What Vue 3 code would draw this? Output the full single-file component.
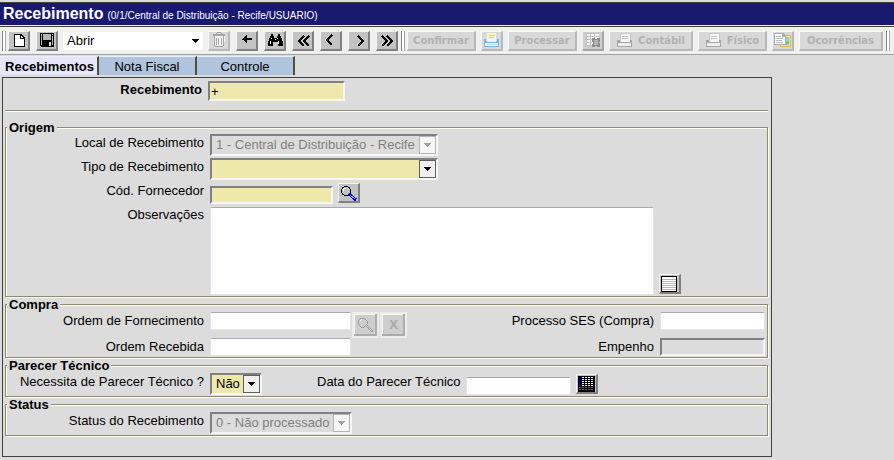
<script setup>
import { ref } from 'vue'

const tabs = ['Recebimentos', 'Nota Fiscal', 'Controle']
const activeTab = ref('Recebimentos')
const command = ref('Abrir')
const code = ref('+')
const notes = ref('')
</script>

<template>
  <div class="app">
    <header class="titlebar">
      <h1>Recebimento</h1>
      <span class="context">(0/1/Central de Distribuição - Recife/USUARIO)</span>
    </header>

    <div class="toolbar" role="toolbar">
      <span class="grip"></span>
      <div class="icons">
        <button class="tool" aria-label="Novo">
          <svg viewBox="0 0 18 16"><path d="M4 2h7l4 4v9H4z" fill="#000" /><path d="M5 3h5v4h4v7H5z" fill="#fff" /><path d="M11 4l2 2h-2z" fill="#fff" /></svg>
        </button>
        <button class="tool" aria-label="Salvar">
          <svg viewBox="0 0 18 16"><path d="M2 1h14v14H3l-1-1z" fill="#000" /><path d="M3 2h1v11H3zM14 4h1v9h-1zM14 2h1v1h-1zM5 2h8v6H5z" fill="#b4b4b4" /><path d="M11 10h2v4h-2z" fill="#d8d8d8" /></svg>
        </button>
      </div>
      <span class="select plain">
        <select v-model="command" aria-label="Comando"><option>Abrir</option></select>
        <span class="arrow"><svg viewBox="0 0 7 4"><path d="M0 0h7v1H6v1H5v1H4v1H3V3H2V2H1V1H0z" /></svg></span>
      </span>
      <div class="icons">
        <button class="tool off" disabled aria-label="Excluir">
          <svg viewBox="0 0 18 16"><path d="M4 4h11v1l-1 10H5L4 5z" fill="#f4f4f4" /><path d="M3 2h12v2H3zM7 0h4v1H7zM6 1h1v1H6zM11 1h1v1h-1zM4 4h1v10H4zM13 4h1v10h-1zM5 14h8v1H5zM6 6h1v7H6zM8 6h1v7H8zM11 6h1v7h-1z" fill="#a5a5a5" /></svg>
        </button>
        <button class="tool" aria-label="Voltar">
          <svg viewBox="0 0 18 16"><path d="M4 7h1V6h1V5h1V4h1V3h1v3h5v2H9v3H8v-1H7V9H6V8H4z" /></svg>
        </button>
        <button class="tool" aria-label="Localizar">
          <svg viewBox="0 0 18 16"><path d="M5 2h2v2h1v2h3V4h1V2h2v2h1v2h1v3h1v5h-5v-4H7v4H2V9h1V6h1V4h1z" /><path d="M5 6h1v1H5zM4 9h1v3H4zM11 6h1v1h-1zM12 9h1v3h-1zM9 7h1v1H9z" fill="#fff" /></svg>
        </button>
        <button class="tool" aria-label="Primeiro">
          <svg viewBox="0 0 18 16"><path d="M10 4L5 9l5 5M15 4l-5 5 5 5" class="chevron" /></svg>
        </button>
        <button class="tool" aria-label="Anterior">
          <svg viewBox="0 0 18 16"><path d="M10 3L5 8l5 5" class="chevron" /></svg>
        </button>
        <button class="tool" aria-label="Próximo">
          <svg viewBox="0 0 18 16"><path d="M8 4l5 5-5 5" class="chevron" /></svg>
        </button>
        <button class="tool" aria-label="Último">
          <svg viewBox="0 0 18 16"><path d="M4 4l5 5-5 5M9 4l5 5-5 5" class="chevron" /></svg>
        </button>
      </div>
      <span class="grip"></span>
      <div class="actions">
        <button class="action" disabled>Confirmar</button>
        <button class="tool off" disabled aria-label="Imprimir">
          <svg viewBox="0 0 18 16"><path d="M4 1h9v8H4z" fill="#f8f6c8" /><path d="M6 3h6v1H6zM6 5h5v1H6z" fill="#d5cf9c" /><path d="M1 7h2v2h11V7h2v8H1z" fill="#74b8f2" /><path d="M4 6h9v4H4zM2 11h13v3H2z" fill="#edf5fc" /><path d="M4 12h9v1H4z" fill="#c6dff2" /></svg>
        </button>
        <button class="action" disabled>Processar</button>
        <button class="tool mid" disabled aria-label="Cancelar processamento">
          <svg viewBox="0 0 18 16"><path d="M2 1h13v12H2z" fill="#f5f5f5" /><path d="M2 1h13v1H2zM2 4h13v1H2zM2 7h7v1H2zM2 10h6v1H2zM2 13h6v1H2zM2 1h1v13H2zM6 2h1v11H6zM10 2h1v4h-1z" fill="#c0c0c0" /><path d="M8 6h2l2 1 2-1h2v3l-1 2 1 1v3h-3l-1-1-2 1H8v-3l1-1-1-2z" fill="#8c8c8c" /><path d="M10 8h4v5h-4z" fill="#b4b4b4" /></svg>
        </button>
        <button class="action wide" disabled>
          <svg viewBox="0 0 18 16"><path d="M4 1h10v9H4z" fill="#f5f5f5" stroke="#c8c8c8" /><path d="M6 4h6v1H6zM6 6h6v1H6z" fill="#c4c4c4" /><path d="M1 8h3v2h10V8h2v7H1z" fill="#a6a6a6" /><path d="M2 11h13v3H2z" fill="#eee" /></svg>
          Contábil
        </button>
        <button class="action" disabled>
          <svg viewBox="0 0 18 16"><path d="M4 1h10v9H4z" fill="#f5f5f5" stroke="#c8c8c8" /><path d="M6 4h6v1H6zM6 6h6v1H6z" fill="#c4c4c4" /><path d="M1 8h3v2h10V8h2v7H1z" fill="#a6a6a6" /><path d="M2 11h13v3H2z" fill="#eee" /></svg>
          Físico
        </button>
        <button class="tool off" disabled aria-label="Documentos">
          <svg viewBox="0 0 18 16"><path d="M6 3h11v12H6z" fill="#dcb75c" /><path d="M7 4h9v10H7z" fill="#f6df84" /><path d="M11 5h4v8h-4z" fill="#83d3ea" /><path d="M11 9h4v3h-4z" fill="#80c75c" /><path d="M0 1h9l3 3v9H0z" fill="#a9adb4" /><path d="M1 2h7v3h3v7H1z" fill="#fff" /><path d="M2 4h5v1H2zM2 6h7v1H2zM2 8h6v1H2zM2 10h7v1H2z" fill="#b8b8b8" /></svg>
        </button>
        <button class="action wide" disabled>Ocorrências</button>
      </div>
      <span class="grip"></span>
    </div>

    <nav class="tabs" role="tablist">
      <button v-for="tab in tabs" :key="tab" role="tab" class="tab" :class="{ active: tab === activeTab }"
        :aria-selected="tab === activeTab" @click="activeTab = tab">{{ tab }}</button>
    </nav>

    <main class="panel">
      <div class="row key">
        <label for="rec">Recebimento</label>
        <input id="rec" v-model="code" class="sunken required" type="text" />
      </div>
      <hr />

      <fieldset class="origin">
        <legend>Origem</legend>
        <div class="row">
          <label for="local">Local de Recebimento</label>
          <span class="select disabled local">
            <select id="local" disabled><option>1 - Central de Distribuição - Recife</option></select>
            <span class="arrow"><svg viewBox="0 0 7 4"><path d="M0 0h7v1H6v1H5v1H4v1H3V3H2V2H1V1H0z" /></svg></span>
          </span>
        </div>
        <div class="row">
          <label for="tipo">Tipo de Recebimento</label>
          <span class="select required local">
            <select id="tipo"><option></option></select>
            <span class="arrow"><svg viewBox="0 0 7 4"><path d="M0 0h7v1H6v1H5v1H4v1H3V3H2V2H1V1H0z" /></svg></span>
          </span>
        </div>
        <div class="row">
          <label for="forn">Cód. Fornecedor</label>
          <div class="line low">
            <input id="forn" class="sunken required supplier" type="text" />
            <button class="tool" aria-label="Pesquisar fornecedor">
              <svg viewBox="0 0 18 16"><path d="M4 1h4v1h2v2h1v4h-1v2H8v1H4v-1H2V8H1V4h1V2h2z" fill="#000" /><path d="M4 2h4v1h1v1h1v4H9v1H8v1H4V9H3V8H2V4h1V3h1z" fill="#bfc3c3" /><path d="M3 3h3v1H4v2H3z" fill="#fff" /><path d="M9 9l7 6" stroke="#0000e0" stroke-width="3" /><path d="M10 10l5 4" stroke="#a0a0ff" stroke-width="1" /></svg>
            </button>
          </div>
        </div>
        <div class="row notes">
          <label for="obs">Observações</label>
          <div class="line low">
            <textarea id="obs" v-model="notes"></textarea>
            <button class="tool" aria-label="Expandir observações">
              <svg viewBox="0 0 18 16"><path d="M0 0h16v16H0z" /><path d="M1 1h14v14H1z" fill="#fff" /><path d="M1 3h14v1H1zM1 5h14v1H1zM1 7h14v1H1zM1 9h14v1H1zM1 11h14v1H1zM1 13h14v1H1z" fill="#b8b8b8" /></svg>
            </button>
          </div>
        </div>
      </fieldset>

      <fieldset>
        <legend>Compra</legend>
        <div class="row tall">
          <label for="ordem">Ordem de Fornecimento</label>
          <div class="line">
            <input id="ordem" class="box order" type="text" />
            <span class="pair">
              <button class="tool mini" disabled aria-label="Pesquisar ordem">
                <svg viewBox="0 0 18 16"><path d="M4 1h3l3 3v3l-3 3H4L1 7V4zM9 9l6 6M10 8l6 6-1 1" fill="none" stroke="#9c9ca0" /><path d="M3 4l2-2" stroke="#fff" /></svg>
              </button>
              <button class="tool mini letter" disabled aria-label="Limpar ordem">X</button>
            </span>
            <label for="processo" class="end">Processo SES (Compra)</label>
            <input id="processo" class="box short" type="text" />
          </div>
        </div>
        <div class="row">
          <label for="recebida">Ordem Recebida</label>
          <div class="line">
            <input id="recebida" class="box order" type="text" />
            <label for="empenho" class="end">Empenho</label>
            <input id="empenho" class="sunken short off" type="text" disabled />
          </div>
        </div>
      </fieldset>

      <fieldset>
        <legend>Parecer Técnico</legend>
        <div class="row">
          <label for="parecer">Necessita de Parecer Técnico ?</label>
          <div class="line">
            <span class="select required yesno">
              <select id="parecer"><option>Não</option></select>
              <span class="arrow"><svg viewBox="0 0 7 4"><path d="M0 0h7v1H6v1H5v1H4v1H3V3H2V2H1V1H0z" /></svg></span>
            </span>
            <label for="data" class="date-label">Data do Parecer Técnico</label>
            <input id="data" class="box short bottom" type="text" />
            <button class="tool calendar" aria-label="Calendário">
              <svg viewBox="0 0 18 16">
                <path d="M1 0h17v16H1z" />
                <path d="M2 2.500h3M2 4.500h3M2 6.500h3M2 8.500h3" stroke="#000080" />
                <path d="M5 1.500h12M5 3.500h12M5 5.500h12M5 7.500h12M5 9.500h12" stroke="#fff" stroke-dasharray="2 1" />
                <path d="M2 11.500h15M2 13.500h15" stroke="#e000e0" stroke-dasharray="2 1" />
              </svg>
            </button>
          </div>
        </div>
      </fieldset>

      <fieldset>
        <legend>Status</legend>
        <div class="row">
          <label for="status">Status do Recebimento</label>
          <span class="select disabled status">
            <select id="status" disabled><option>0 - Não processado</option></select>
            <span class="arrow"><svg viewBox="0 0 7 4"><path d="M0 0h7v1H6v1H5v1H4v1H3V3H2V2H1V1H0z" /></svg></span>
          </span>
        </div>
      </fieldset>
    </main>
  </div>
</template>

<style>
body {
  background: #dcdcdc;
}
</style>

<style scoped>
.app,
.app * {
  box-sizing: border-box;
}

.app {
  font: 13px/16px "Liberation Sans", Arial, sans-serif;
  color: #000;
}

button,
input,
select,
textarea {
  font: inherit;
  margin: 0;
  padding: 0;
  border-radius: 0;
}

svg {
  display: block;
  shape-rendering: crispEdges;
}

.titlebar {
  display: flex;
  align-items: baseline;
  gap: 4px;
  height: 25px;
  margin-top: 2px;
  padding: 2px 3px;
  background: #191970;
  border-top: 1px solid #404040;
  border-bottom: 1px solid #404040;
  box-shadow: inset 0 -1px 0 #f0f0f0;
  color: #fff;
  white-space: nowrap;
}

.titlebar h1 {
  margin: 0;
  font-size: 16px;
  line-height: 18px;
}

.context {
  font-size: 10px;
}

.toolbar {
  display: flex;
  align-items: center;
  height: 28px;
  padding-left: 2px;
  background: #f0f0f0;
  border-bottom: 1px solid #a0a0a0;
}

.grip {
  flex: none;
  width: 4px;
  height: 20px;
  margin: 0 2px 0 3px;
  border-left: 1px solid #858585;
  border-right: 1px solid #a8a8a8;
  background: #fff;
}

.grip:first-child {
  margin-left: 0;
}

.icons {
  display: flex;
  gap: 6px;
}

.actions {
  display: flex;
  gap: 5px;
}

.tool,
.action {
  flex: none;
  display: flex;
  align-items: center;
  justify-content: center;
  height: 20px;
  border: 2px solid;
  border-color: #f4f4f4 #808080 #808080 #f4f4f4;
  background: #c3c3c3;
}

.tool {
  width: 22px;
  border-top-width: 1px;
  border-left-width: 1px;
}

.tool svg,
.action svg {
  flex: none;
  width: 18px;
  height: 16px;
}

.chevron {
  fill: none;
  stroke: #000;
  stroke-width: 1.5;
}

.tool.off,
.action {
  background: #d8d8d8;
  border-color: #f8f8f8 #b8b8b8 #b8b8b8 #f8f8f8;
}

.tool.mid {
  background: #cecece;
  border-color: #f4f4f4 #a4a4a4 #a4a4a4 #f4f4f4;
}

.action {
  gap: 4px;
  width: 69px;
  border-top-width: 1px;
  border-left-width: 1px;
  padding-top: 2px;
  color: #b2b2b2;
  font: bold 10px/14px "DejaVu Sans", Verdana, sans-serif;
}

.action svg {
  height: 16px;
  margin-top: -2px;
}

.action.wide {
  width: 84px;
}

.select {
  display: grid;
  height: 22px;
  border: 2px solid;
  border-color: #808080 #f6f6f6 #f6f6f6 #808080;
}

.select select {
  grid-area: 1 / 1;
  width: 100%;
  padding: 0 20px 0 4px;
  border: 0;
  appearance: none;
  background: transparent;
  color: #000;
}

.select.plain {
  width: 140px;
  height: 18px;
  margin: 0 5px;
  border: 0;
  background: #fff;
}

.arrow {
  grid-area: 1 / 1;
  justify-self: end;
  display: grid;
  place-items: center;
  width: 17px;
  border: 1px solid #606060;
  background: #f0f0f0;
  pointer-events: none;
}

.arrow svg {
  width: 7px;
  height: 4px;
}

.plain .arrow {
  width: 15px;
  border: 0;
  background: #fff;
}

.required {
  background: #eee8aa;
}

.select.disabled select {
  color: #808080;
  opacity: 1;
}

.disabled .arrow {
  background: #f6f6f6;
  border-color: #b4b4b4;
}

.disabled svg {
  fill: #a0a0a0;
}

.tabs {
  display: flex;
  height: 22px;
  padding: 1px 0 2px;
}

.tab {
  width: 98px;
  padding-top: 1px;
  border: 0;
  border-top: 1px solid #e8eef6;
  border-right: 2px solid #505038;
  background: #b0c4de;
  color: #000;
}

.tab.active {
  width: 99px;
  padding-left: 2px;
  background: #e6e6fa;
  font-weight: bold;
}

.panel {
  max-width: 770px;
  margin-left: 2px;
  padding: 3px 3px 19px 2px;
  border: 1px solid #404040;
}

.row {
  display: grid;
  grid-template-columns: 198px 1fr;
  column-gap: 6px;
  align-items: start;
}

label {
  padding-top: 1px;
  white-space: nowrap;
}

.row > label {
  text-align: right;
}

.key {
  grid-template-columns: 197px 137px;
}

.key label {
  font-weight: bold;
}

.sunken {
  height: 18px;
  padding-left: 1px;
  border: 2px solid;
  border-color: #808080 #f6f6f6 #f6f6f6 #808080;
}

.sunken.off {
  background: #dcdcdc;
}

.key .sunken {
  height: 20px;
}

.box,
textarea {
  height: 18px;
  border: 1px solid #e3e3ee;
  border-top-color: #a9a9b3;
  border-radius: 2px;
  background: #fff;
}

hr {
  height: 2px;
  margin: 9px 0;
  border: 0;
  border-top: 1px solid #8f8a74;
  background: #fffff0;
}

fieldset {
  min-width: 0;
  margin: 0 0 1px;
  padding: 2px 2px 1px 0;
  border: 1px solid #8f8a74;
  box-shadow: 1px 1px 0 #fffff0, inset 1px 1px 0 #fffff0;
}

legend {
  height: 12px;
  margin-left: 1px;
  padding: 0 2px;
  background: #dcdcdc;
  font-weight: bold;
  line-height: 14px;
}

.origin {
  padding-top: 1px;
}

.origin .row {
  min-height: 24px;
}

.local {
  width: 228px;
}

.line {
  display: flex;
  align-items: flex-start;
}

.low {
  align-items: flex-end;
  gap: 5px;
}

.low .tool {
  margin-bottom: 1px;
}

.origin .low {
  height: 22px;
}

.supplier {
  width: 123px;
}

.origin .notes .low {
  height: 89px;
}

textarea {
  flex: 0 1 444px;
  height: 88px;
  resize: none;
}

.order {
  width: 141px;
}

.short {
  width: 105px;
}

.end {
  margin: 0 6px 0 auto;
}

.tall {
  height: 26px;
}

.pair {
  display: flex;
  gap: 1px;
  margin-left: 1px;
}

.tool.mini {
  width: 27px;
  height: 26px;
  border: 2px solid #ececec;
  background: #cecece;
  box-shadow: inset -2px -2px 0 #acacac, inset 1px 1px 0 #f6f6f6;
}

.letter {
  color: #a4a8ac;
  font-weight: bold;
}

.yesno {
  width: 52px;
}

.yesno select {
  padding-right: 17px;
}

.date-label {
  margin: 0 5px 0 55px;
}

.bottom {
  align-self: flex-end;
}

.calendar {
  margin: 1px 0 0 5px;
}

.status {
  width: 142px;
}
</style>
